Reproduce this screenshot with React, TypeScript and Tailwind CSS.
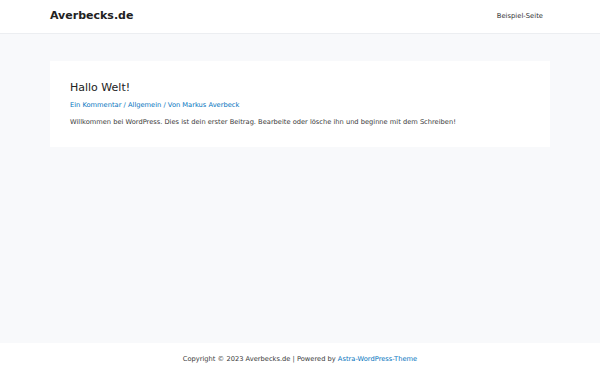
export default function App() {
  return (
    <div className="flex min-h-screen flex-col bg-[#f8f9fb] font-['DejaVu_Sans',sans-serif] text-[#3a3a3a]">
      <header className="flex h-[34px] items-center justify-between border-b border-[#eceef1] bg-white px-[50px]">
        <div className="text-[11px] font-bold text-[#222]">Averbecks.de</div>
        <nav className="pr-[7px] text-[6.8px] text-[#333]">Beispiel-Seite</nav>
      </header>

      <main className="flex-1 px-[50px] pt-[27px]">
        <article className="bg-white px-[20px] pb-[20px] pt-[19px]">
          <h1 className="text-[11px] leading-[16px] text-[#222]">Hallo Welt!</h1>
          <div className="mt-[4px] text-[6.7px] text-[#0274be]">
            Ein Kommentar / Allgemein / Von Markus Averbeck
          </div>
          <p className="mt-[7px] text-[6.68px] text-[#3a3a3a]">
            Willkommen bei WordPress. Dies ist dein erster Beitrag. Bearbeite oder lösche ihn und beginne mit dem Schreiben!
          </p>
        </article>
      </main>

      <footer className="flex h-[32px] items-center justify-center bg-white text-[6.7px] text-[#3a3a3a]">
        <span>
          Copyright © 2023 Averbecks.de | Powered by{' '}
          <span className="text-[#0274be]">Astra-WordPress-Theme</span>
        </span>
      </footer>
    </div>
  );
}
